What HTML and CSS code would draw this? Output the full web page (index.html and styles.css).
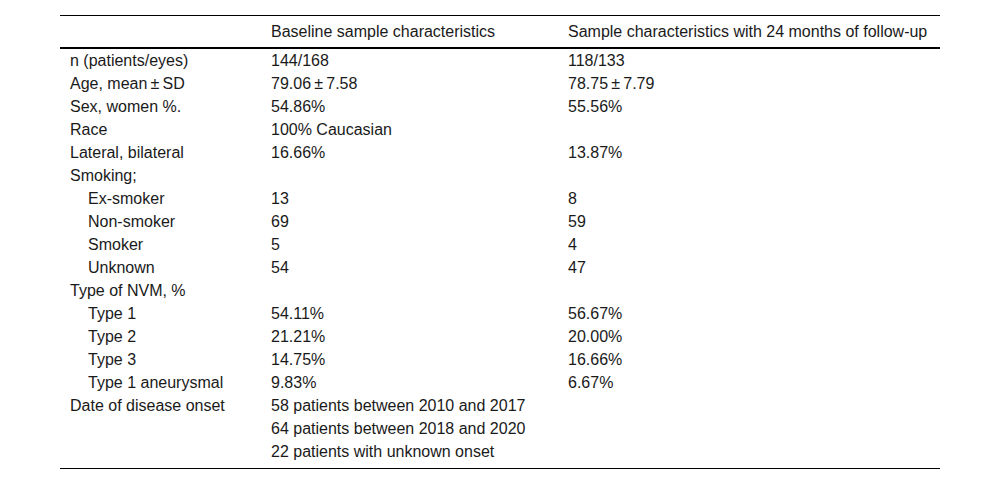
FILE: index.html
```html
<!DOCTYPE html>
<html>
<head>
<meta charset="utf-8">
<link rel="stylesheet" href="styles.css">
</head>
<body>
<div class="wrap">
<table class="tbl">
<colgroup><col class="c1"><col class="c2"><col class="c3"></colgroup>
<thead>
<tr><th></th><th>Baseline sample characteristics</th><th>Sample characteristics with 24 months of follow-up</th></tr>
</thead>
<tbody>
<tr><td>n (patients/eyes)</td><td>144/168</td><td>118/133</td></tr>
<tr><td>Age, mean&#8201;±&#8201;SD</td><td>79.06&#8201;±&#8201;7.58</td><td>78.75&#8201;±&#8201;7.79</td></tr>
<tr><td>Sex, women %.</td><td>54.86%</td><td>55.56%</td></tr>
<tr><td>Race</td><td>100% Caucasian</td><td></td></tr>
<tr><td>Lateral, bilateral</td><td>16.66%</td><td>13.87%</td></tr>
<tr><td>Smoking;</td><td></td><td></td></tr>
<tr><td class="ind">Ex-smoker</td><td>13</td><td>8</td></tr>
<tr><td class="ind">Non-smoker</td><td>69</td><td>59</td></tr>
<tr><td class="ind">Smoker</td><td>5</td><td>4</td></tr>
<tr><td class="ind">Unknown</td><td>54</td><td>47</td></tr>
<tr><td>Type of NVM, %</td><td></td><td></td></tr>
<tr><td class="ind">Type 1</td><td>54.11%</td><td>56.67%</td></tr>
<tr><td class="ind">Type 2</td><td>21.21%</td><td>20.00%</td></tr>
<tr><td class="ind">Type 3</td><td>14.75%</td><td>16.66%</td></tr>
<tr><td class="ind">Type 1 aneurysmal</td><td>9.83%</td><td>6.67%</td></tr>
<tr class="last"><td>Date of disease onset</td><td>58 patients between 2010 and 2017<br>64 patients between 2018 and 2020<br>22 patients with unknown onset</td><td></td></tr>
</tbody>
</table>
</div>
</body>
</html>
```

FILE: styles.css
```css
html, body {
  margin: 0;
  padding: 0;
  background: #fff;
}
.wrap {
  padding: 15px 60px 0 60px;
}
.tbl {
  width: 880px;
  border-collapse: collapse;
  table-layout: fixed;
  font-family: "Liberation Sans", Arial, sans-serif;
  font-size: 16px;
  color: #1a1a1a;
  border-top: 1px solid #000;
  border-bottom: 1px solid #000;
}
.c1 { width: 201px; }
.c2 { width: 297px; }
.c3 { width: 382px; }
.tbl th {
  font-weight: normal;
  text-align: left;
  height: 31px;
  padding: 0 0 0 10px;
  line-height: 31px;
  vertical-align: middle;
  border-bottom: 2px solid #000;
}
.tbl td {
  padding: 0 0 0 10px;
  line-height: 23px;
  height: 23px;
  vertical-align: top;
  white-space: nowrap;
}
.tbl td.ind {
  padding-left: 28px;
}
.tbl tr.last td {
  padding-bottom: 5px;
}
```
